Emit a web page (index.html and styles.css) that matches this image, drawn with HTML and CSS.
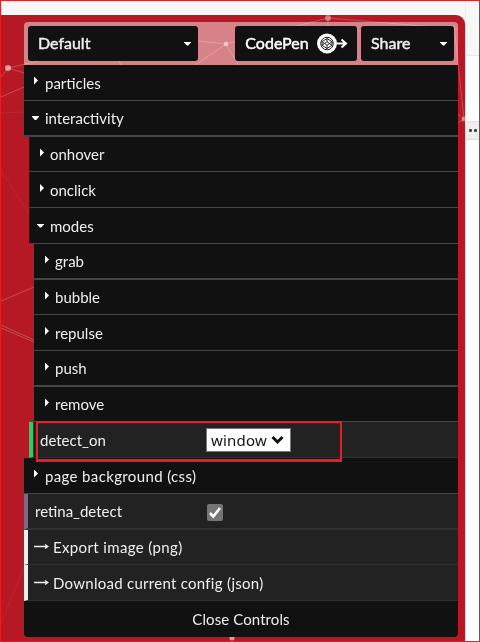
FILE: index.html
```html
<!DOCTYPE html>
<html lang="en">
<head>
<meta charset="utf-8">
<title>Particle controls</title>
<link rel="stylesheet" href="styles.css">
</head>
<body>
<main class="page">
  <div class="stage">
    <svg class="particles" width="464" height="626" viewBox="1 15 464 626" fill="none" stroke="#fff">
      <g opacity=".22">
        <path d="M1 77 8 68 56 57M8 68 24 73M1 97 24 87M1 301 34 287M1 325 34 340M1 328 34 342"/>
        <path d="M185 72 226 44 198 41M226 44 240 68M226 44 328 18 458 29M328 18V26M454 25 464 119 458 114M464 119 458 123M119 61 121 65"/>
      </g>
      <path d="M1 113 24 112M1 170 29 214M24 568 1 623" opacity=".06"/>
      <g fill="#fff" stroke="none" opacity=".55"><circle cx="8" cy="68" r="3"/><circle cx="226" cy="44" r="2.2"/><circle cx="328" cy="18" r="3" opacity=".7"/><circle cx="464" cy="119" r="2.5" opacity=".7"/><circle cx="232" cy="638" r="2.500"/></g>
    </svg>
    <section class="panel">
      <header class="bar">
        <button class="button preset"><span>Default</span><i class="down"></i></button>
        <button class="button codepen"><span>CodePen</span>
          <svg width="31" height="22" viewBox="0 0 31 22"><circle cx="10" cy="10.500" r="10" fill="#fff"/><g fill="none" stroke="#222" stroke-width="1"><circle cx="10" cy="10.500" r="6.300"/><path d="m10 5.500 5 3.200v3.600l-5 3.200-5-3.200V8.700zM5 8.700l5 3.600 5-3.600M5 12.300l5-3.600 5 3.600M10 5.500v3.200M10 12.300v3.200"/></g><path d="M20 10.500h9M24.500 6.500l4.500 4-4.500 4" fill="none" stroke="#fff" stroke-width="2"/></svg>
        </button>
        <button class="button share"><span>Share</span><i class="down"></i></button>
      </header>
      <div class="row"><i class="right"></i><span>particles</span></div>
      <div class="row thick"><i class="down"></i><span>interactivity</span></div>
      <div class="group">
        <div class="row short"><i class="right"></i><span>onhover</span></div>
        <div class="row"><i class="right"></i><span>onclick</span></div>
        <div class="row"><i class="down"></i><span>modes</span></div>
        <div class="group">
          <div class="row thick"><i class="right"></i><span>grab</span></div>
          <div class="row short"><i class="right"></i><span>bubble</span></div>
          <div class="row"><i class="right"></i><span>repulse</span></div>
          <div class="row thick"><i class="right"></i><span>push</span></div>
          <div class="row short"><i class="right"></i><span>remove</span></div>
        </div>
        <div class="row field string"><span class="name">detect_on</span><span class="select"><span>window</span><svg width="13" height="10" viewBox="0 0 13 10"><path d="m1.500 2 5 5 5-5" fill="none" stroke="#111" stroke-width="3"/></svg></span></div>
      </div>
      <div class="row"><i class="right"></i><span class="wide">page background (css)</span></div>
      <div class="row field boolean thick"><span class="name">retina_detect</span><span class="check"><svg width="16" height="17" viewBox="0 0 16 17"><path d="m3 9 3.300 3.500L13 4" fill="none" stroke="#fff" stroke-width="2.600"/></svg></span></div>
      <div class="row field action short"><svg class="arrow" width="15" height="8" viewBox="0 0 15 8"><path d="M0 3.500h14M11 1.500l3 2-3 2" fill="none" stroke="#eee" stroke-width="1.300"/></svg><span class="wide">Export image (png)</span></div>
      <div class="row field action"><svg class="arrow" width="15" height="8" viewBox="0 0 15 8"><path d="M0 3.500h14M11 1.500l3 2-3 2" fill="none" stroke="#eee" stroke-width="1.300"/></svg><span class="wide config">Download current config (json)</span></div>
      <div class="close">Close Controls</div>
    </section>
  </div>
  <aside class="side"><div class="side-top"></div><div class="side-gap"></div><div class="side-dots"><b></b><b></b></div></aside>
  <div class="highlight"></div>
</main>
</body>
</html>
```
FILE: styles.css
```css
* { box-sizing: border-box; }
body { margin: 0; }
.page {
  position: relative; display: flex; width: 480px; height: 642px;
  border: 1px solid #ed1c24; overflow: hidden; background: #f7f7f7;
  font: 15px/20px Lato, "Liberation Sans", sans-serif; color: #eee;
}
.stage {
  position: relative; width: 464px; height: 626px; margin-top: 14px;
  padding: 7px 7px 0 23px; background: #b61924; border-radius: 0 9px 0 0; overflow: hidden;
}
.particles { position: absolute; left: 0; top: 0; }
.panel { position: relative; width: 434px; border-radius: 4px; overflow: hidden; }
.bar { display: flex; height: 43px; padding: 4px; background: rgba(255,255,255,.46); }
.button {
  display: flex; align-items: center; height: 35px; padding: 0 7px 0 10px;
  border: 0; border-radius: 3px; background: #111; color: #eee;
  font: 16px/20px Lato, sans-serif; -webkit-text-stroke: .45px currentColor;
}
.button span { position: relative; top: -1px; }
.button .down { margin: 0 0 0 auto; }
.preset { width: 170px; }
.codepen { width: 122px; margin-left: 37px; color: #fff; }
.codepen span { width: 64px; }
.codepen svg { margin-left: 8px; flex: none; }
.share { width: 93px; margin-left: 4px; }
.row {
  display: flex; align-items: center; height: 36px; padding-left: 10px;
  background: #111; border-bottom: 1px solid #444;
}
.thick { border-bottom-width: 2px; }
.short { height: 35px; }
.group { margin-left: 5px; }
.right { width: 4px; height: 8px; margin: 0 7px 4px 0; background: #fff; clip-path: polygon(0 0,100% 50%,0 100%); }
.group .right { margin: 0 6px 3px 1px; }
.down { width: 7px; height: 4px; margin: 0 6px 0 -2px; background: #fff; clip-path: polygon(0 0,100% 0,100% 20%,60% 100%,40% 100%,0 20%); }
.wide { letter-spacing: .36px; }
.config { letter-spacing: .27px; }
.field { padding-left: 7px; background: #222; border-left: 4px solid #eee; border-bottom-color: #303030; }
.name { width: 167px; }
.string { border-left-color: #1ed36f; }
.boolean { border-left-color: #806787; }
.string .name { width: 166px; }
.select {
  display: flex; align-items: center; gap: 4px; width: 85px; height: 24px; padding-left: 4px;
  border: 1px solid #767676; background: #fff; color: #111;
  font: 15px/20px "Noto Sans", sans-serif; letter-spacing: .2px;
}
.check { display: flex; width: 16px; height: 17px; margin: 2px 0 0 5px; border-radius: 2px; background: #757575; }
.arrow { margin: 0 4px 0 -1px; }
.close { height: 36px; line-height: 36px; text-align: center; letter-spacing: .1px; background: #111; }
.side { display: flex; flex-direction: column; width: 14px; background: #fff; border-left: 1px solid #eee; }
.side-top { height: 55px; background: #f7f7f7; border-bottom: 1px solid #e8e8e8; }
.side-gap { height: 65px; }
.side-dots { display: flex; align-items: center; gap: 2px; height: 19px; padding-left: 3px; background: #eee; border: 1px solid #e0e0e0; border-width: 1px 0; }
.side-dots b { width: 3px; height: 3px; border-radius: 1px; background: #444; }
.highlight { position: absolute; left: 35px; top: 420px; width: 306px; height: 41px; border: 2px solid #ed1c24; border-bottom-width: 3px; }
```
